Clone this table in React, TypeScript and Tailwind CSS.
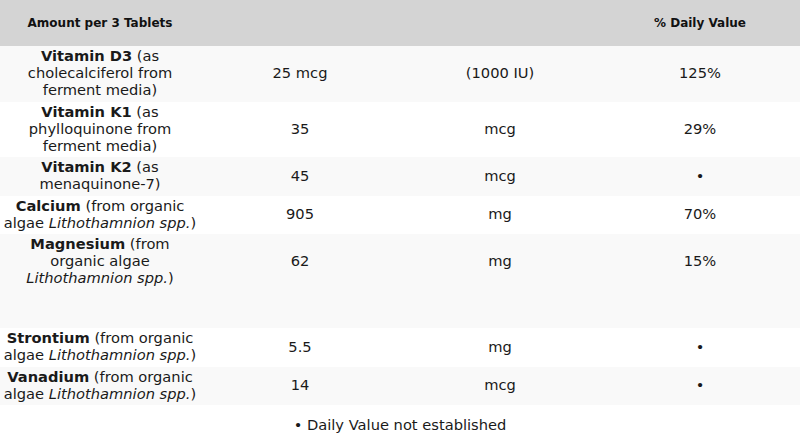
import React from "react";

type Row = {
  name: string;
  desc: React.ReactNode;
  amount: string;
  unit: string;
  dv: string;
  extra?: boolean;
};

const rows: Row[] = [
  { name: "Vitamin D3", desc: <> (as cholecalciferol from ferment media)</>, amount: "25 mcg", unit: "(1000 IU)", dv: "125%" },
  { name: "Vitamin K1", desc: <> (as phylloquinone from ferment media)</>, amount: "35", unit: "mcg", dv: "29%" },
  { name: "Vitamin K2", desc: <> (as menaquinone-7)</>, amount: "45", unit: "mcg", dv: "•" },
  { name: "Calcium", desc: <> (from organic algae <i>Lithothamnion spp.</i>)</>, amount: "905", unit: "mg", dv: "70%" },
  { name: "Magnesium", desc: <> (from organic algae <i>Lithothamnion spp.</i>)</>, amount: "62", unit: "mg", dv: "15%", extra: true },
  { name: "Strontium", desc: <> (from organic algae <i>Lithothamnion spp.</i>)</>, amount: "5.5", unit: "mg", dv: "•" },
  { name: "Vanadium", desc: <> (from organic algae <i>Lithothamnion spp.</i>)</>, amount: "14", unit: "mcg", dv: "•" },
];

export default function App() {
  return (
    <div
      className="w-[800px] h-[445px] bg-white text-[#1a1a1a] overflow-hidden"
      style={{ fontFamily: '"DejaVu Sans", sans-serif' }}
    >
      <div className="flex h-[46px] items-center bg-[#d4d4d4] text-[12px] font-bold text-[#111]">
        <div className="w-[200px] text-center">Amount per 3 Tablets</div>
        <div className="w-[200px]" />
        <div className="w-[200px]" />
        <div className="w-[200px] text-center">% Daily Value</div>
      </div>
      {rows.map((r, i) => (
        <div
          key={r.name}
          className={`${i % 2 === 0 ? "bg-[#f9f9f9]" : "bg-white"} pt-[1px] ${r.extra ? "pb-[42px]" : "pb-[3.5px]"}`}
        >
          <div className="flex items-center text-[14.667px] leading-[17px]">
            <div className="w-[200px] px-[2px] text-center">
              <b>{r.name}</b>
              {r.desc}
            </div>
            <div className="w-[200px] text-center">{r.amount}</div>
            <div className="w-[200px] text-center">{r.unit}</div>
            <div className="w-[200px] text-center">{r.dv}</div>
          </div>
        </div>
      ))}
      <div className="py-[11px] text-center text-[14.667px] leading-[17px]">• Daily Value not established</div>
    </div>
  );
}
